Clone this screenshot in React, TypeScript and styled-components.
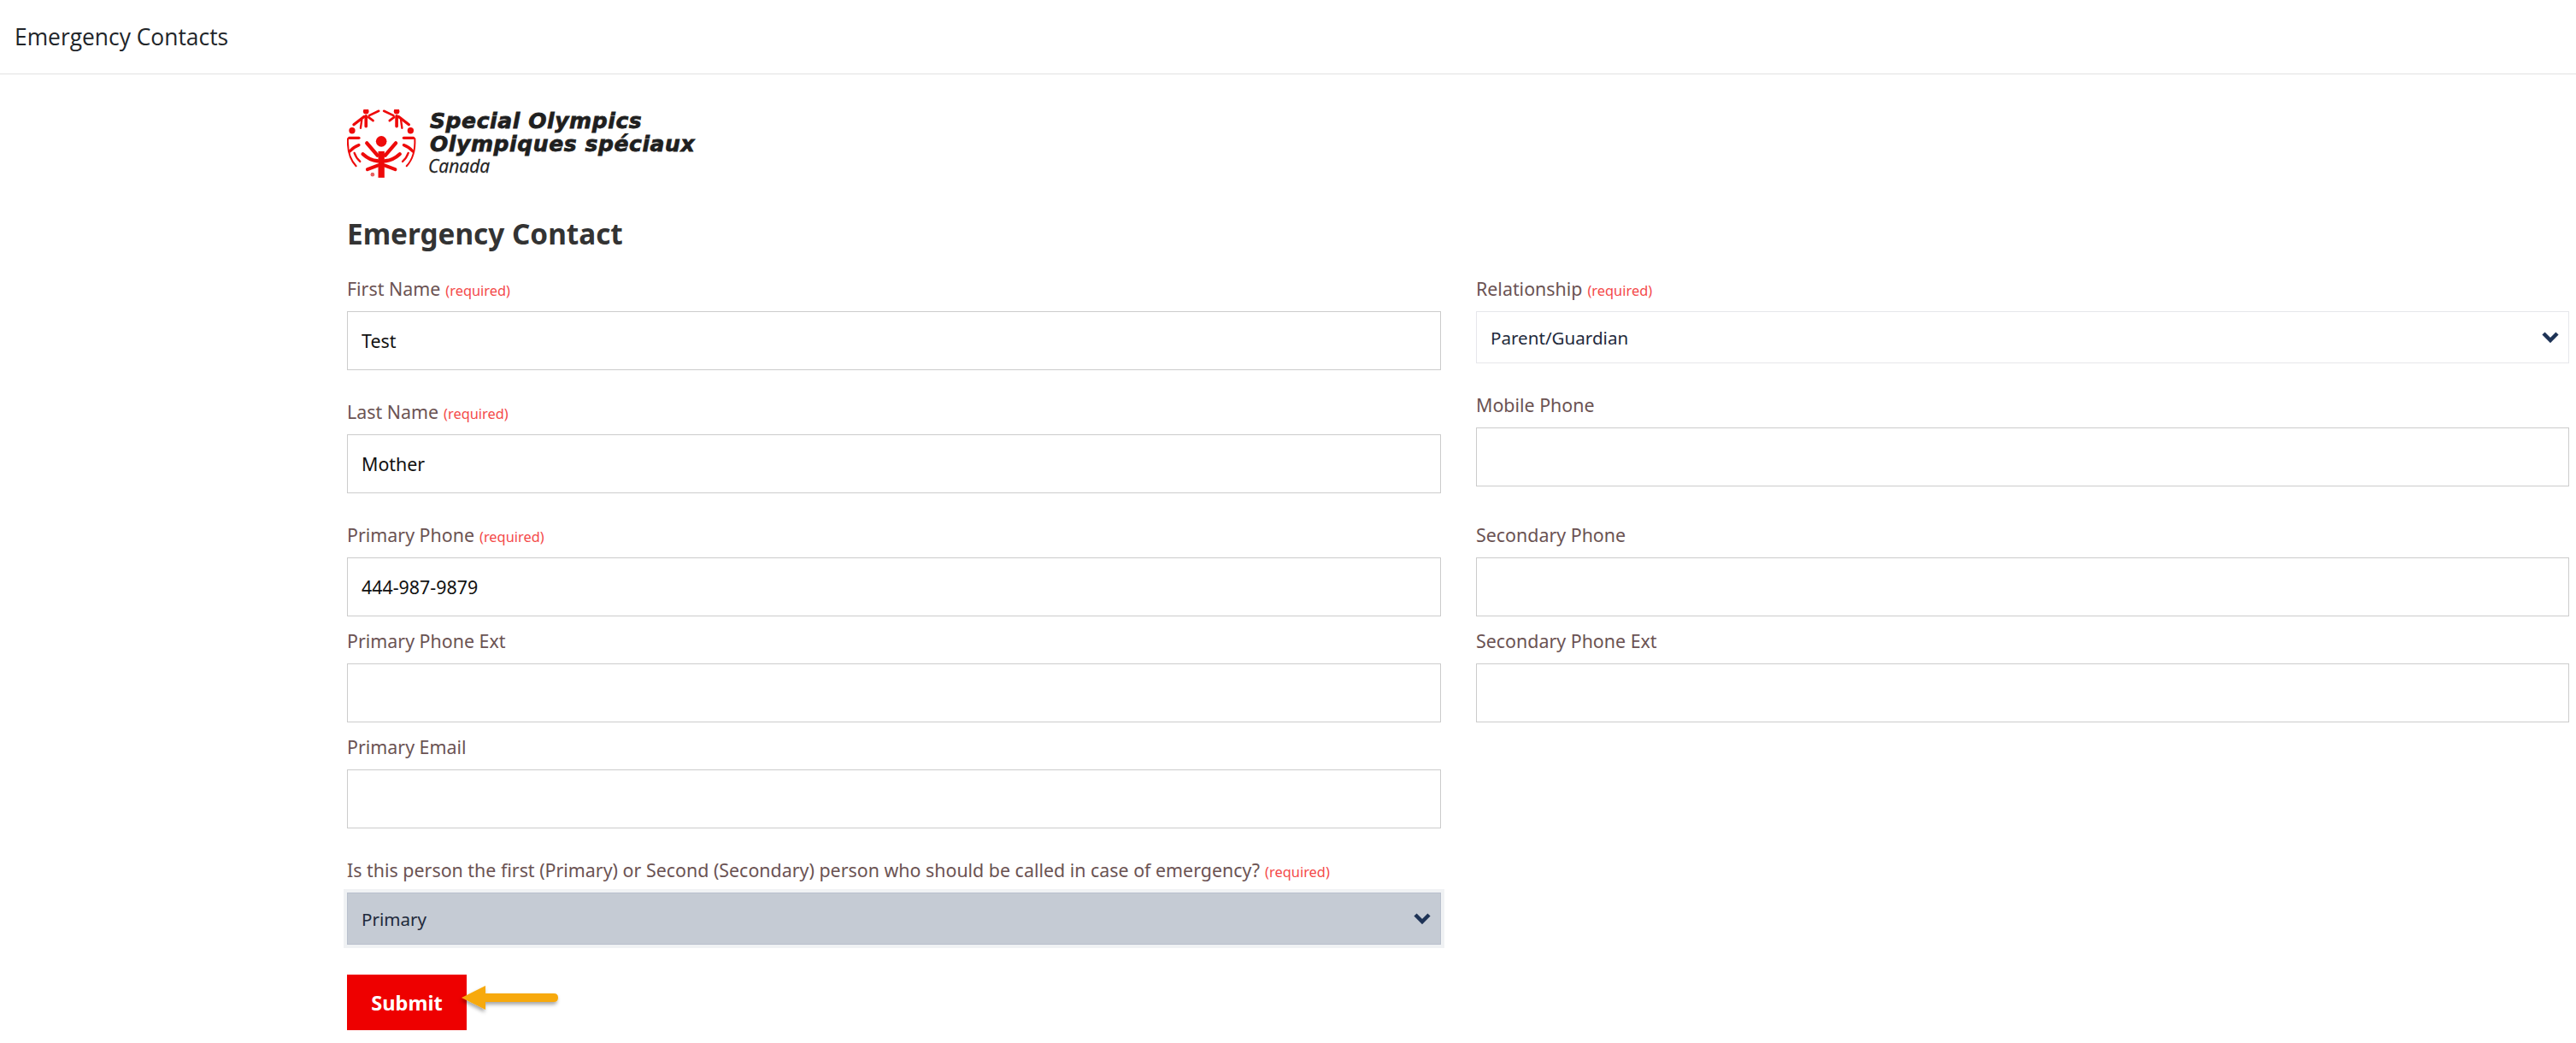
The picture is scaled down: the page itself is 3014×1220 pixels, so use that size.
import styled, { createGlobalStyle } from 'styled-components'

const GlobalStyle = createGlobalStyle`
  body {
    margin: 0;
    background: #fff;
    font-family: "Noto Sans", "Open Sans", sans-serif;
  }
`

const TopBar = styled.header`
  height: 86px;
  display: flex;
  align-items: center;
  padding-left: 17px;
  border-bottom: 1px solid #e2e2e2;
  font-family: "Open Sans", "Noto Sans", sans-serif;
  font-size: 26.4px;
  color: #212529;
`

const Content = styled.main`
  padding: 41px 8px 0 406px;
`

const Logo = styled.div`
  display: flex;
  align-items: flex-start;
  gap: 15px;
  height: 80px;
`

const LogoWords = styled.div`
  display: flex;
  flex-direction: column;
  font-family: "DejaVu Sans", sans-serif;
  font-style: italic;
  font-weight: 700;
  color: #1f1f1f;
`

const LogoLine = styled.div`
  font-size: 25px;
  line-height: 27px;
  height: 27px;
  letter-spacing: 0.6px;
  -webkit-text-stroke: 0.8px #1f1f1f;
`

const LogoCanada = styled.div`
  font-family: "Open Sans", sans-serif;
  font-weight: 400;
  font-size: 21px;
  line-height: 22px;
  margin-top: 1px;
  margin-left: -2px;
  -webkit-text-stroke: 0.3px #1f1f1f;
`

const Title = styled.h1`
  margin: 43px 0 0;
  height: 73px;
  font-size: 33.3px;
  line-height: 44px;
  font-weight: 700;
  color: #333;
`

const Columns = styled.div`
  display: grid;
  grid-template-columns: 1280px 1279px;
  column-gap: 41px;
`

const Column = styled.div`
  display: flex;
  flex-direction: column;
`

const Field = styled.div<{ $after: number }>`
  display: flex;
  flex-direction: column;
  margin-bottom: ${p => p.$after}px;
`

const Label = styled.label`
  height: 28px;
  line-height: 28px;
  margin-bottom: 12px;
  font-size: 21.4px;
  color: #6b5353;
  white-space: nowrap;
`

const Required = styled.span`
  margin-left: 6px;
  font-size: 16.4px;
  color: #f44a4a;
`

const TextInput = styled.input`
  box-sizing: border-box;
  width: 100%;
  height: 69px;
  padding: 0 16px;
  border: 1px solid #cccccc;
  border-radius: 0;
  outline: none;
  background: #fff;
  font-family: inherit;
  font-size: 21.4px;
  color: #111;
`

const SelectWrap = styled.div`
  position: relative;
  display: flex;
`

const Select = styled.select<{ $focused?: boolean }>`
  appearance: none;
  box-sizing: border-box;
  width: 100%;
  height: 61px;
  padding: 0 16px;
  border: 1px solid ${p => (p.$focused ? '#b9c0cd' : '#e6e7eb')};
  border-radius: 0;
  outline: none;
  background: ${p => (p.$focused ? '#c5cbd4' : '#fff')};
  box-shadow: ${p => (p.$focused ? '0 0 0 4px #f0f2f4' : 'none')};
  font-family: inherit;
  font-size: 20.6px;
  color: #1f2a3c;
`

const Chevron = styled.svg`
  position: absolute;
  right: 11px;
  top: 50%;
  width: 22px;
  height: 14px;
  margin-top: -8px;
  pointer-events: none;
`

const SubmitRow = styled.div`
  position: relative;
  width: 140px;
`

const SubmitButton = styled.button`
  display: block;
  width: 140px;
  height: 65px;
  border: none;
  border-radius: 0;
  background: #ee0000;
  color: #fff;
  font-family: inherit;
  font-size: 23.6px;
  font-weight: 700;
`

const Callout = styled.svg`
  position: absolute;
  left: 134px;
  top: 12px;
  width: 120px;
  height: 40px;
  overflow: visible;
`

function Emblem() {
  const side = (
    <g fill="none" stroke="#ee0a0a" strokeLinecap="round">
      <path d="M127 186 L90 143" strokeWidth="13" />
      <path d="M127 206 Q100 204 76 182" strokeWidth="13" />
      <path d="M128 222 L92 236" strokeWidth="12" />
      <circle cx="38" cy="99" r="11" fill="#ee0a0a" stroke="none" />
      <path d="M23 128 Q20 190 52 224" strokeWidth="6" />
      <path d="M28 125 L62 125" strokeWidth="10" />
      <path d="M62 150 Q42 158 30 172" strokeWidth="10" />
      <path d="M46 178 Q52 196 66 208" strokeWidth="7" />
      <circle cx="87" cy="31" r="10" fill="#ee0a0a" stroke="none" />
      <path d="M87 48 L87 84" strokeWidth="11" />
      <path d="M80 50 L44 78" strokeWidth="10" />
      <path d="M98 46 L132 30" strokeWidth="8" />
      <path d="M96 52 L112 64" strokeWidth="8" />
      <path d="M72 62 L68 90" strokeWidth="7" />
    </g>
  )
  return (
    <svg width="82" height="80" viewBox="20 25 247 240">
      <circle cx="141" cy="137" r="19" fill="#ee0a0a" />
      <rect x="130" y="172" width="22" height="93" fill="#ee0a0a" />
      {side}
      <g transform="matrix(-1 0 0 1 282 0)">{side}</g>
      <circle cx="110" cy="254" r="7" fill="#e86060" />
    </svg>
  )
}

function ChevronIcon() {
  return (
    <Chevron viewBox="0 0 22 14">
      <path d="M3 3 L11 11 L19 3" fill="none" stroke="#1e3356" strokeWidth="4.5" />
    </Chevron>
  )
}

export default function App() {
  return (
    <>
      <GlobalStyle />
      <TopBar>Emergency Contacts</TopBar>
      <Content>
        <Logo>
          <Emblem />
          <LogoWords>
            <LogoLine>Special Olympics</LogoLine>
            <LogoLine>Olympiques spéciaux</LogoLine>
            <LogoCanada>Canada</LogoCanada>
          </LogoWords>
        </Logo>
        <Title>Emergency Contact</Title>
        <Columns>
          <Column>
            <Field $after={35}>
              <Label>First Name<Required>(required)</Required></Label>
              <TextInput readOnly value="Test" />
            </Field>
            <Field $after={35}>
              <Label>Last Name<Required>(required)</Required></Label>
              <TextInput readOnly value="Mother" />
            </Field>
            <Field $after={15}>
              <Label>Primary Phone<Required>(required)</Required></Label>
              <TextInput readOnly value="444-987-9879" />
            </Field>
            <Field $after={15}>
              <Label>Primary Phone Ext</Label>
              <TextInput readOnly value="" />
            </Field>
            <Field $after={35}>
              <Label>Primary Email</Label>
              <TextInput readOnly value="" />
            </Field>
            <Field $after={35}>
              <Label>
                Is this person the first (Primary) or Second (Secondary) person who should be called in case of emergency?
                <Required>(required)</Required>
              </Label>
              <SelectWrap>
                <Select $focused defaultValue="Primary">
                  <option>Primary</option>
                  <option>Secondary</option>
                </Select>
                <ChevronIcon />
              </SelectWrap>
            </Field>
            <SubmitRow>
              <SubmitButton>Submit</SubmitButton>
              <Callout viewBox="0 0 120 40">
                <defs>
                  <filter id="calloutShadow" x="-20%" y="-30%" width="140%" height="170%">
                    <feDropShadow dx="-1" dy="3" stdDeviation="2" floodColor="#000" floodOpacity="0.35" />
                  </filter>
                </defs>
                <path
                  d="M0 15 L28 1 L28 10 L108 10 Q113 10 113 15 Q113 20 108 20 L28 20 L28 29 Z"
                  fill="#f7a90c"
                  filter="url(#calloutShadow)"
                />
              </Callout>
            </SubmitRow>
          </Column>
          <Column>
            <Field $after={35}>
              <Label>Relationship<Required>(required)</Required></Label>
              <SelectWrap>
                <Select defaultValue="Parent/Guardian">
                  <option>Parent/Guardian</option>
                </Select>
                <ChevronIcon />
              </SelectWrap>
            </Field>
            <Field $after={43}>
              <Label>Mobile Phone</Label>
              <TextInput readOnly value="" />
            </Field>
            <Field $after={15}>
              <Label>Secondary Phone</Label>
              <TextInput readOnly value="" />
            </Field>
            <Field $after={0}>
              <Label>Secondary Phone Ext</Label>
              <TextInput readOnly value="" />
            </Field>
          </Column>
        </Columns>
      </Content>
    </>
  )
}
